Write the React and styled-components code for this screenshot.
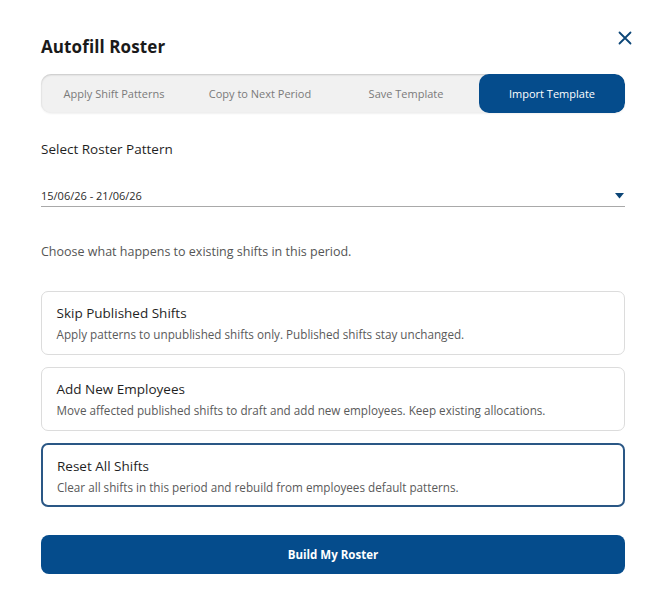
import React, { useState } from 'react';
import styled, { createGlobalStyle } from 'styled-components';

const GlobalStyle = createGlobalStyle`
  html, body {
    margin: 0;
    padding: 0;
    background: #fff;
  }
  body {
    font-family: 'Open Sans', 'Liberation Sans', sans-serif;
    color: #222;
  }
  * {
    box-sizing: border-box;
  }
`;

const TABS = ['Apply Shift Patterns', 'Copy to Next Period', 'Save Template', 'Import Template'];

const OPTIONS = [
  {
    title: 'Skip Published Shifts',
    text: 'Apply patterns to unpublished shifts only. Published shifts stay unchanged.',
  },
  {
    title: 'Add New Employees',
    text: 'Move affected published shifts to draft and add new employees. Keep existing allocations.',
  },
  {
    title: 'Reset All Shifts',
    text: 'Clear all shifts in this period and rebuild from employees default patterns.',
  },
];

export default function App() {
  const [tab, setTab] = useState(3);
  const [choice, setChoice] = useState(2);

  return (
    <>
      <GlobalStyle />
      <Modal>
        <Header>
          <Title>Autofill Roster</Title>
          <Close aria-label="close">
            <svg width="14" height="14" viewBox="0 0 14 14">
              <path d="M1.5 1.5 L12.5 12.5 M12.5 1.5 L1.5 12.5" stroke="#0c4677" strokeWidth="1.8" strokeLinecap="round" />
            </svg>
          </Close>
        </Header>

        <Tabs>
          {TABS.map((t, i) => (
            <Tab key={t} $active={tab === i} onClick={() => setTab(i)}>
              {t}
            </Tab>
          ))}
        </Tabs>

        <Label>Select Roster Pattern</Label>

        <Select>
          <span>15/06/26 - 21/06/26</span>
          <svg width="9" height="6" viewBox="0 0 9 6">
            <path d="M0 0 H9 L4.5 5.5 Z" fill="#0c4677" />
          </svg>
        </Select>

        <Hint>Choose what happens to existing shifts in this period.</Hint>

        <Options>
          {OPTIONS.map((o, i) => (
            <Card key={o.title} $selected={choice === i} onClick={() => setChoice(i)}>
              <CardTitle>{o.title}</CardTitle>
              <CardText>{o.text}</CardText>
            </Card>
          ))}
        </Options>

        <Button type="button">Build My Roster</Button>
      </Modal>
    </>
  );
}

const Modal = styled.div`
  width: 670px;
  padding: 28px 45px 0 41px;
  display: flex;
  flex-direction: column;
`;

const Header = styled.div`
  display: flex;
  justify-content: space-between;
  align-items: flex-start;
  height: 46px;
`;

const Title = styled.h1`
  margin: 7px 0 0;
  font-size: 17px;
  font-weight: 700;
  color: #1a1a1a;
  letter-spacing: 0.1px;
`;

const Close = styled.button`
  border: none;
  background: none;
  padding: 0;
  margin: 3px -7px 0 0;
  cursor: pointer;
  display: flex;
`;

const Tabs = styled.div`
  display: grid;
  grid-template-columns: repeat(4, 1fr);
  height: 39px;
  border-radius: 10px;
  background: #f1f1f1;
  box-shadow: inset 0 1px 2px rgba(0, 0, 0, 0.18), 0 1px 2px rgba(0, 0, 0, 0.06);
  overflow: hidden;
`;

const Tab = styled.button`
  border: none;
  font-family: inherit;
  font-size: 11px;
  color: ${(p) => (p.$active ? '#fff' : '#7a7a7a')};
  background: ${(p) => (p.$active ? '#054c8c' : 'transparent')};
  border-radius: ${(p) => (p.$active ? '10px' : '0')};
  cursor: pointer;
`;

const Label = styled.div`
  margin-top: 27px;
  font-size: 13.5px;
  font-weight: 500;
  color: #1f1f1f;
`;

const Select = styled.div`
  margin-top: 30px;
  display: flex;
  justify-content: space-between;
  align-items: center;
  padding: 0 0 3px;
  border-bottom: 1px solid #a9a9a9;
  font-size: 11px;
  color: #2a2a2a;
  svg {
    margin-right: 1px;
  }
`;

const Hint = styled.p`
  margin: 36px 0 0;
  font-size: 12.5px;
  color: #555;
`;

const Options = styled.div`
  margin-top: 31px;
  display: flex;
  flex-direction: column;
  gap: 12px;
`;

const Card = styled.div`
  height: 64px;
  padding: 12px 15px 0;
  border-radius: 7px;
  border: ${(p) => (p.$selected ? '2px solid #2a5785' : '1.5px solid #dcdcdc')};
  padding-left: ${(p) => (p.$selected ? '14px' : '14.5px')};
  cursor: pointer;
`;

const CardTitle = styled.div`
  font-size: 13.5px;
  font-weight: 500;
  color: #1f1f1f;
`;

const CardText = styled.div`
  margin-top: 4px;
  font-size: 11.7px;
  color: #5a5a5a;
`;

const Button = styled.button`
  margin-top: 28px;
  height: 39px;
  border: none;
  border-radius: 8px;
  background: #054c8c;
  color: #fff;
  font-family: inherit;
  font-size: 11.5px;
  font-weight: 700;
  cursor: pointer;
`;
